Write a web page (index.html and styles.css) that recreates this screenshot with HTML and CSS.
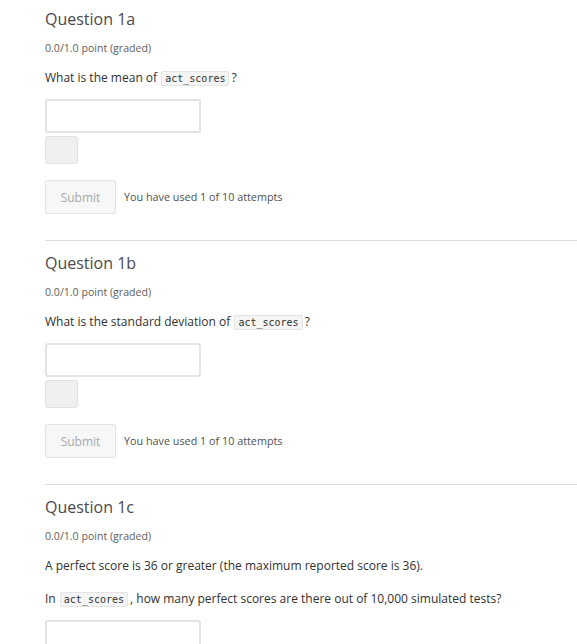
FILE: index.html
```html
<!DOCTYPE html>
<html>
<head>
<meta charset="utf-8">
<link rel="stylesheet" href="styles.css">
</head>
<body>
<div class="page">
  <section class="problem first">
    <h3 class="title">Question 1a</h3>
    <div class="meta">0.0/1.0 point (graded)</div>
    <p class="text">What is the mean of <code>act_scores</code>?</p>
    <input class="answer" type="text">
    <div class="status"></div>
    <div class="actions">
      <button class="submit">Submit</button>
      <span class="attempts">You have used 1 of 10 attempts</span>
    </div>
  </section>
  <hr class="divider">
  <section class="problem">
    <h3 class="title">Question 1b</h3>
    <div class="meta">0.0/1.0 point (graded)</div>
    <p class="text">What is the standard deviation of <code>act_scores</code>?</p>
    <input class="answer" type="text">
    <div class="status"></div>
    <div class="actions">
      <button class="submit">Submit</button>
      <span class="attempts">You have used 1 of 10 attempts</span>
    </div>
  </section>
  <hr class="divider">
  <section class="problem">
    <h3 class="title">Question 1c</h3>
    <div class="meta">0.0/1.0 point (graded)</div>
    <p class="text">A perfect score is 36 or greater (the maximum reported score is 36).</p>
    <p class="text">In <code>act_scores</code>, how many perfect scores are there out of 10,000 simulated tests?</p>
    <input class="answer" type="text">
  </section>
</div>
</body>
</html>
```

FILE: styles.css
```css
html, body {
  margin: 0;
  padding: 0;
  background: #ffffff;
}
body {
  font-family: "Open Sans", "Noto Sans", sans-serif;
  color: #313131;
  overflow: hidden;
}
.page {
  padding-left: 45px;
}
.problem {
  padding-top: 10px;
  padding-bottom: 24px;
}
.problem.first {
  padding-top: 7px;
}
.title {
  margin: 0;
  font-size: 16px;
  line-height: 24px;
  font-weight: 400;
  color: #4a4a4a;
}
.meta {
  margin-top: 9px;
  font-size: 10.6px;
  line-height: 16px;
  color: #5e5e5e;
}
.text {
  margin: 12px 0 0;
  font-size: 12px;
  line-height: 20px;
  color: #313131;
}
.text + .text {
  margin-top: 13px;
}
code {
  font-family: "DejaVu Sans Mono", monospace;
  font-size: 10px;
  background: #f5f5f5;
  border: 1px solid #e4e4e4;
  border-radius: 2px;
  padding: 1px 3px;
  margin: 0 2px 0 1px;
  color: #313131;
}
.answer {
  display: block;
  box-sizing: border-box;
  margin: 10px 0 0;
  width: 156px;
  height: 34px;
  border: 2px solid #e3e3e3;
  border-radius: 3px;
  background: #fff;
  padding: 0;
}
.status {
  box-sizing: border-box;
  margin-top: 3px;
  width: 33px;
  height: 28px;
  background: #f0f0f0;
  border: 1px solid #e0e0e0;
  border-radius: 3px;
}
.actions {
  margin-top: 16px;
  display: flex;
  align-items: center;
  gap: 8px;
}
.submit {
  box-sizing: border-box;
  width: 71px;
  height: 34px;
  background: #f7f7f7;
  border: 1px solid #e3e3e3;
  border-radius: 2px;
  font-family: "Open Sans", "Noto Sans", sans-serif;
  font-size: 12px;
  color: #a8a8a8;
  padding: 0;
  margin-bottom: 2px;
}
.attempts {
  font-size: 10.8px;
  color: #4f4f4f;
  margin-bottom: 3px;
}
.divider {
  margin: 0;
  border: 0;
  border-top: 1px solid #dedede;
  height: 0;
}
```
